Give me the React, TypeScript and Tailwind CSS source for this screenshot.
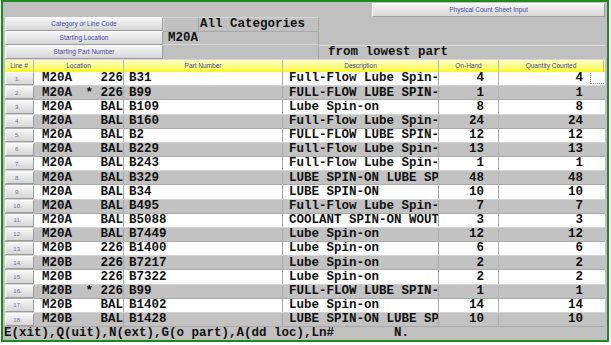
import React from "react";

type Row = {
  loc: string;
  star: boolean;
  bin: string;
  part: string;
  desc: string;
  onHand: string;
  counted: string;
};

const rows: Row[] = [
  { loc: "M20A", star: false, bin: "226", part: "B31", desc: "Full-Flow Lube Spin-", onHand: "4", counted: "4" },
  { loc: "M20A", star: true, bin: "226", part: "B99", desc: "FULL-FLOW LUBE SPIN-", onHand: "1", counted: "1" },
  { loc: "M20A", star: false, bin: "BAL", part: "B109", desc: "Lube Spin-on", onHand: "8", counted: "8" },
  { loc: "M20A", star: false, bin: "BAL", part: "B160", desc: "Full-Flow Lube Spin-", onHand: "24", counted: "24" },
  { loc: "M20A", star: false, bin: "BAL", part: "B2", desc: "FULL-FLOW LUBE SPIN-", onHand: "12", counted: "12" },
  { loc: "M20A", star: false, bin: "BAL", part: "B229", desc: "Full-Flow Lube Spin-", onHand: "13", counted: "13" },
  { loc: "M20A", star: false, bin: "BAL", part: "B243", desc: "Full-Flow Lube Spin-", onHand: "1", counted: "1" },
  { loc: "M20A", star: false, bin: "BAL", part: "B329", desc: "LUBE SPIN-ON LUBE SP", onHand: "48", counted: "48" },
  { loc: "M20A", star: false, bin: "BAL", part: "B34", desc: "LUBE SPIN-ON", onHand: "10", counted: "10" },
  { loc: "M20A", star: false, bin: "BAL", part: "B495", desc: "Full-Flow Lube Spin-", onHand: "7", counted: "7" },
  { loc: "M20A", star: false, bin: "BAL", part: "B5088", desc: "COOLANT SPIN-ON WOUT", onHand: "3", counted: "3" },
  { loc: "M20A", star: false, bin: "BAL", part: "B7449", desc: "Lube Spin-on", onHand: "12", counted: "12" },
  { loc: "M20B", star: false, bin: "226", part: "B1400", desc: "Lube Spin-on", onHand: "6", counted: "6" },
  { loc: "M20B", star: false, bin: "226", part: "B7217", desc: "Lube Spin-on", onHand: "2", counted: "2" },
  { loc: "M20B", star: false, bin: "226", part: "B7322", desc: "Lube Spin-on", onHand: "2", counted: "2" },
  { loc: "M20B", star: true, bin: "226", part: "B99", desc: "FULL-FLOW LUBE SPIN-", onHand: "1", counted: "1" },
  { loc: "M20B", star: false, bin: "BAL", part: "B1402", desc: "Lube Spin-on", onHand: "14", counted: "14" },
  { loc: "M20B", star: false, bin: "BAL", part: "B1428", desc: "LUBE SPIN-ON LUBE SP", onHand: "10", counted: "10" },
];

const mono = "font-['Liberation_Mono','Courier_New',monospace] font-bold text-[12.5px] text-[#111] whitespace-pre leading-none";
const small = "font-['Liberation_Sans',Arial,sans-serif] text-[6.5px] text-[#4646a6] leading-none whitespace-nowrap";
const btn = "bg-gradient-to-b from-[#f6f6f6] to-[#d6d6d6] border border-t-[#fbfbfb] border-l-[#fbfbfb] border-b-[#9c9c9c] border-r-[#9c9c9c]";

function LabelButton({ text }: { text: string }) {
  return (
    <div className={`w-[158px] h-full flex items-center justify-center ${btn}`}>
      <span className={small}>{text}</span>
    </div>
  );
}

export default function App() {
  return (
    <div className="w-[611px] h-[345px] bg-white">
      <div className="ml-[1px] w-[608px] h-[342px] border-2 border-[#1d8a1d] bg-[#c0c0c0] flex flex-col px-[2px]">
        {/* top bar */}
        <div className="h-[15px] flex justify-end items-end pb-[0px]">
          <div className={`w-[233px] h-[14px] flex items-center justify-center ${btn}`}>
            <span className={small}>Physical Count Sheet Input</span>
          </div>
        </div>

        {/* form rows */}
        <div className="h-[14px] flex">
          <LabelButton text="Category or Line Code" />
          <div className="w-[36px] h-full border-t border-l border-[#d8d8d8] border-r border-r-[#a8a8a8]" />
          <div className="w-[120px] h-full flex items-center pl-[1px] border-t border-[#d8d8d8] border-r border-r-[#a8a8a8]">
            <span className={mono}>All Categories</span>
          </div>
        </div>
        <div className="h-[14px] flex">
          <LabelButton text="Starting Location" />
          <div className="w-[156px] h-full flex items-center pl-[5px] border-t border-[#a8a8a8] border-r border-r-[#a8a8a8] border-b border-b-[#d8d8d8]">
            <span className={mono}>M20A</span>
          </div>
        </div>
        <div className="h-[14px] flex">
          <LabelButton text="Starting Part Number" />
          <div className="w-[156px] h-full border-r border-[#a8a8a8]" />
          <div className="flex-1 h-full flex items-center pl-[9px] border-t border-[#dedede]">
            <span className={mono}>from lowest part</span>
          </div>
        </div>

        {/* table */}
        <div className="flex flex-col">
          <div className="h-[13px] flex bg-gradient-to-b from-[#ffffc4] to-[#f8f800] border-t border-[#d8d8d8]">
            {[
              ["Line #", "w-[29px]"],
              ["Location", "w-[90px]"],
              ["Part Number", "w-[159px]"],
              ["Description", "w-[156px]"],
              ["On-Hand", "w-[60px]"],
              ["Quantity Counted", "w-[105px]"],
            ].map(([t, w]) => (
              <div key={t} className={`${w} h-full flex items-center justify-center border-r border-[#b8b8b8]`}>
                <span className={small}>{t}</span>
              </div>
            ))}
          </div>
          <div className="h-[255px] flex flex-col">
            {rows.map((r, i) => {
              const gray = i % 2 === 1;
              const bg = gray ? "bg-[#c2c2c2]" : "bg-white";
              return (
                <div key={i} className={`flex-1 flex ${bg} border-b ${gray ? "border-[#aaaaaa]" : "border-[#d4d4d4]"}`}>
                  <div className={`w-[29px] flex items-center justify-center pr-[4px] ${btn}`}>
                    <span className="font-['Liberation_Sans',Arial,sans-serif] text-[6px] text-[#6a6aa8] leading-none">{i + 1}.</span>
                  </div>
                  <div className="w-[90px] flex items-center justify-between pl-[8px] border-r border-[#a8a8a8]">
                    <span className={mono}>{r.loc}</span>
                    <span className={mono}>{(r.star ? "* " : "  ") + r.bin}</span>
                  </div>
                  <div className="w-[159px] flex items-center pl-[5px] border-r border-[#a8a8a8]">
                    <span className={mono}>{r.part}</span>
                  </div>
                  <div className="w-[156px] flex items-center pl-[6px] overflow-hidden border-r border-[#a8a8a8]">
                    <span className={mono}>{r.desc}</span>
                  </div>
                  <div className="w-[60px] flex items-center justify-end pr-[14px] border-r border-[#b0b0b0]">
                    <span className={mono}>{r.onHand}</span>
                  </div>
                  <div className="w-[105px] flex items-center justify-end pr-[21px] relative">
                    <span className={mono}>{r.counted}</span>
                    {i === 0 && (
                      <div className="absolute right-0 top-[1px] w-[14px] h-[11px] border-l border-b border-dotted border-[#9a9a9a]" />
                    )}
                  </div>
                </div>
              );
            })}
          </div>
        </div>

        {/* status line */}
        <div className="h-[13px] flex items-center -ml-[1px]">
          <span className={mono}>{"E(xit),Q(uit),N(ext),G(o part),A(dd loc),Ln#        N."}</span>
        </div>
      </div>
    </div>
  );
}
